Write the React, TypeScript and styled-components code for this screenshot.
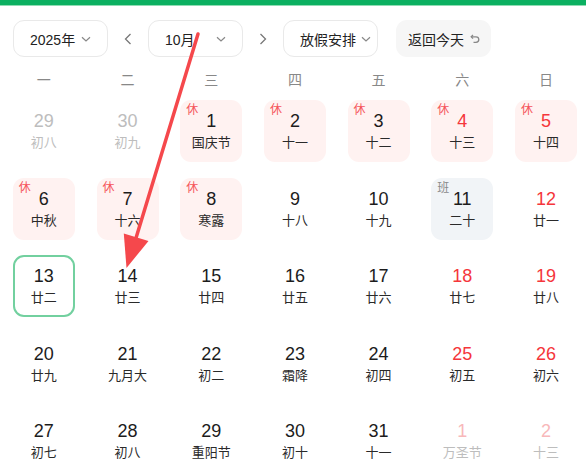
import { FC } from "react";
import styled, { createGlobalStyle, css } from "styled-components";

const GlobalStyle = createGlobalStyle`
  html, body {
    margin: 0;
    padding: 0;
    background: #fff;
    overflow: hidden;
  }
  body {
    font-family: "Liberation Sans", "Noto Sans CJK SC", sans-serif;
    color: #222;
  }
`;

type Mark = "rest" | "work" | "today" | "none";
type Tone = "normal" | "red" | "muted" | "mutedRed";

interface IDay {
  day: number;
  lunar: string;
  mark?: Mark;
  tone?: Tone;
}

const weeks: IDay[][] = [
  [
    { day: 29, lunar: "初八", tone: "muted" },
    { day: 30, lunar: "初九", tone: "muted" },
    { day: 1, lunar: "国庆节", mark: "rest" },
    { day: 2, lunar: "十一", mark: "rest" },
    { day: 3, lunar: "十二", mark: "rest" },
    { day: 4, lunar: "十三", mark: "rest", tone: "red" },
    { day: 5, lunar: "十四", mark: "rest", tone: "red" },
  ],
  [
    { day: 6, lunar: "中秋", mark: "rest" },
    { day: 7, lunar: "十六", mark: "rest" },
    { day: 8, lunar: "寒露", mark: "rest" },
    { day: 9, lunar: "十八" },
    { day: 10, lunar: "十九" },
    { day: 11, lunar: "二十", mark: "work" },
    { day: 12, lunar: "廿一", tone: "red" },
  ],
  [
    { day: 13, lunar: "廿二", mark: "today" },
    { day: 14, lunar: "廿三" },
    { day: 15, lunar: "廿四" },
    { day: 16, lunar: "廿五" },
    { day: 17, lunar: "廿六" },
    { day: 18, lunar: "廿七", tone: "red" },
    { day: 19, lunar: "廿八", tone: "red" },
  ],
  [
    { day: 20, lunar: "廿九" },
    { day: 21, lunar: "九月大" },
    { day: 22, lunar: "初二" },
    { day: 23, lunar: "霜降" },
    { day: 24, lunar: "初四" },
    { day: 25, lunar: "初五", tone: "red" },
    { day: 26, lunar: "初六", tone: "red" },
  ],
  [
    { day: 27, lunar: "初七" },
    { day: 28, lunar: "初八" },
    { day: 29, lunar: "重阳节" },
    { day: 30, lunar: "初十" },
    { day: 31, lunar: "十一" },
    { day: 1, lunar: "万圣节", tone: "mutedRed" },
    { day: 2, lunar: "十三", tone: "mutedRed" },
  ],
];

const weekNames = ["一", "二", "三", "四", "五", "六", "日"];

const Page = styled.div`
  position: relative;
  width: 586px;
  height: 464px;
  overflow: hidden;
`;

const TopBar = styled.div`
  height: 5px;
  background: #0bb061;
  border-bottom: 1px solid #8fdcb4;
`;

const Toolbar = styled.div`
  display: flex;
  align-items: center;
  padding: 14px 0 0 13px;
  height: 37px;
`;

const Select = styled.div<{ $w: number; $pad?: number }>`
  box-sizing: border-box;
  flex: none;
  width: ${(p) => p.$w}px;
  height: 37px;
  border: 1px solid #e9e9e9;
  border-radius: 11px;
  display: flex;
  align-items: center;
  justify-content: space-between;
  padding: 0 ${(p) => p.$pad ?? 14}px 0 16px;
  font-size: 14px;
  color: #222;
`;

const Chevron = styled.svg`
  width: 14px;
  height: 14px;
  stroke: #888;
  fill: none;
  stroke-width: 1.2;
`;

const Arrow = styled.svg`
  flex: none;
  width: 16px;
  height: 16px;
  margin: 0 12px;
  stroke: #777;
  fill: none;
  stroke-width: 1.3;
`;

const TodayButton = styled.div`
  box-sizing: border-box;
  flex: none;
  width: 95px;
  height: 37px;
  margin-left: 18px;
  border-radius: 11px;
  background: #f6f6f6;
  display: flex;
  align-items: center;
  padding-left: 12px;
  gap: 5px;
  font-size: 14px;
  color: #222;
`;

const BackIcon = styled.svg`
  width: 12px;
  height: 12px;
  stroke: #888;
  fill: none;
  stroke-width: 1.3;
`;

const Weekdays = styled.div`
  display: grid;
  grid-template-columns: repeat(7, 83.7px);
  margin-left: 2px;
  height: 43px;
  align-items: center;
`;

const WeekName = styled.div`
  text-align: center;
  font-size: 14px;
  color: #888;
`;

const Grid = styled.div`
  display: grid;
  grid-template-columns: repeat(7, 83.7px);
  grid-auto-rows: 62px;
  row-gap: 15.5px;
  margin-left: 2px;
`;

const Slot = styled.div`
  display: flex;
  justify-content: center;
`;

const Cell = styled.div<{ $mark: Mark }>`
  position: relative;
  box-sizing: border-box;
  width: 62px;
  height: 62px;
  border-radius: 11px;
  display: flex;
  flex-direction: column;
  align-items: center;
  padding-top: 10px;
  ${(p) =>
    p.$mark === "rest" &&
    css`
      background: #fff2f1;
    `}
  ${(p) =>
    p.$mark === "work" &&
    css`
      background: #f1f4f7;
    `}
  ${(p) =>
    p.$mark === "today" &&
    css`
      border: 2px solid #72d09f;
      padding-top: 8px;
    `}
`;

const toneColor: Record<Tone, string> = {
  normal: "#1c1c1c",
  red: "#f5363b",
  muted: "#bdbdbd",
  mutedRed: "#f8b8ba",
};

const lunarColor: Record<Tone, string> = {
  normal: "#2a2a2a",
  red: "#2a2a2a",
  muted: "#bdbdbd",
  mutedRed: "#bdbdbd",
};

const Num = styled.div<{ $tone: Tone }>`
  font-size: 18px;
  line-height: 22px;
  color: ${(p) => toneColor[p.$tone]};
`;

const Lunar = styled.div<{ $tone: Tone }>`
  margin-top: 2px;
  font-size: 13px;
  line-height: 18px;
  color: ${(p) => lunarColor[p.$tone]};
`;

const Badge = styled.span<{ $work?: boolean }>`
  position: absolute;
  left: 6px;
  top: 3px;
  font-size: 12px;
  line-height: 14px;
  color: ${(p) => (p.$work ? "#8a8a8a" : "#f5545a")};
`;

const Annotation = styled.svg`
  position: absolute;
  left: 0;
  top: 0;
  width: 586px;
  height: 464px;
  pointer-events: none;
`;

const ChevronDown: FC = () => (
  <Chevron viewBox="0 0 14 14">
    <path d="M3 5.2 L7 9 L11 5.2" />
  </Chevron>
);

const DayCell: FC<{ d: IDay }> = ({ d }) => {
  const mark = d.mark ?? "none";
  const tone = d.tone ?? "normal";
  return (
    <Slot>
      <Cell $mark={mark}>
        {mark === "rest" && <Badge>休</Badge>}
        {mark === "work" && <Badge $work>班</Badge>}
        <Num $tone={tone}>{d.day}</Num>
        <Lunar $tone={tone}>{d.lunar}</Lunar>
      </Cell>
    </Slot>
  );
};

const App: FC = () => {
  return (
    <Page>
      <GlobalStyle />
      <TopBar />
      <Toolbar>
        <Select $w={95}>
          2025年
          <ChevronDown />
        </Select>
        <Arrow viewBox="0 0 16 16">
          <path d="M10.5 3 L5.5 8 L10.5 13" />
        </Arrow>
        <Select $w={95}>
          10月
          <ChevronDown />
        </Select>
        <Arrow viewBox="0 0 16 16">
          <path d="M5.5 3 L10.5 8 L5.5 13" />
        </Arrow>
        <Select $w={95} $pad={4}>
          放假安排
          <ChevronDown />
        </Select>
        <TodayButton>
          返回今天
          <BackIcon viewBox="0 0 12 12">
            <path d="M4 2 L2.2 3.8 L4 5.6" />
            <path d="M2.4 3.8 H7 A2.8 2.8 0 0 1 7 9.4 H4.5" />
          </BackIcon>
        </TodayButton>
      </Toolbar>
      <Weekdays>
        {weekNames.map((w) => (
          <WeekName key={w}>{w}</WeekName>
        ))}
      </Weekdays>
      <Grid>
        {weeks.flat().map((d, i) => (
          <DayCell key={i} d={d} />
        ))}
      </Grid>
      <Annotation viewBox="0 0 586 464">
        <line
          x1="198"
          y1="34"
          x2="136"
          y2="238"
          stroke="#f5484c"
          strokeWidth="3.5"
          strokeLinecap="round"
        />
        <polygon points="126.5,268 123.8,233.5 148.5,241" fill="#f5484c" />
      </Annotation>
    </Page>
  );
};

export default App;
